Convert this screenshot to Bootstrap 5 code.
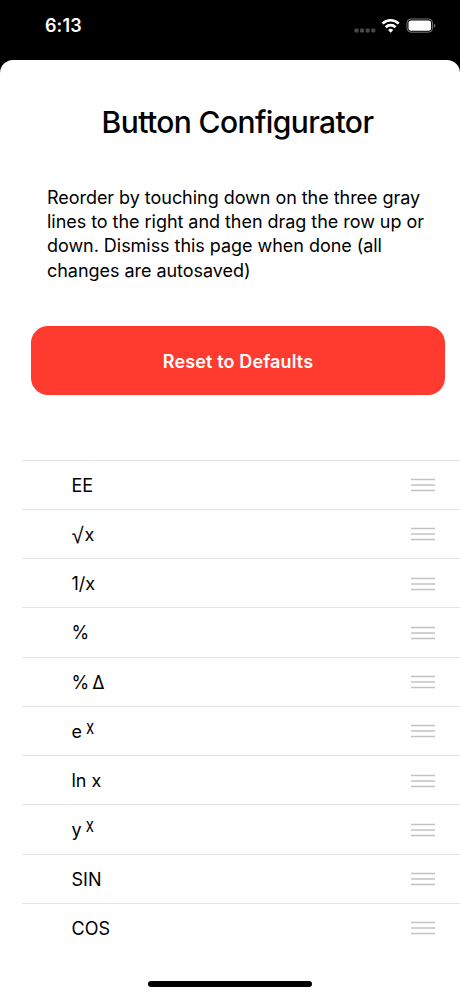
<!DOCTYPE html>
<html lang="en">
<head>
<meta charset="utf-8">
<meta name="viewport" content="width=device-width, initial-scale=1">
<title>Button Configurator</title>
<link href="https://cdn.jsdelivr.net/npm/bootstrap@5.3.0/dist/css/bootstrap.min.css" rel="stylesheet">
<style>
body{font-family:Inter,"Liberation Sans",sans-serif;color:#000;background:#000;height:996px;overflow:hidden}
.status-bar{height:60px;padding:0 24px 8px 45px}
.clock{font-size:18px;font-weight:600;letter-spacing:.1px;line-height:20px}
.sheet{height:936px;border-radius:13px 13px 0 0}
.page-title{font-size:30px;font-weight:500;line-height:36px;letter-spacing:-.6px;padding:44px 0 0 15px}
.intro{font-size:18px;line-height:24.4px;letter-spacing:-.04px;padding:45.6px 20px 0 47px}
.btn-reset{--bs-btn-bg:#ff3b30;--bs-btn-color:#fff;--bs-btn-hover-bg:#e6352b;--bs-btn-hover-color:#fff;height:69px;border:0;border-radius:17px;font-size:18px;font-weight:600;letter-spacing:.15px;padding-top:8px;margin:42.400px 15px 0 31px}
.keys{margin:65px 0 0 22px}
.key-row{height:49.25px;border-top:1px solid #e4e4e6;padding:1px 25px 0 49.5px;font-size:18px}
.radical{font-family:"Liberation Sans",sans-serif;font-size:22px;line-height:18px;margin-right:1px;transform:translateY(2px)}
.change{word-spacing:-2px}
.power{font-size:15px;line-height:18px;transform:translateY(-5px) scaleY(1.25);margin-left:4px}
.home-bar{width:164px;height:6px;margin-bottom:9px}
</style>
</head>
<body>
<header class="status-bar d-flex align-items-center justify-content-between text-white">
  <span class="clock">6:13</span>
  <div class="d-flex align-items-center">
    <svg width="82" height="20" viewBox="354 15.5 82 20" aria-label="Wi-Fi and battery">
      <g fill="#48484a"><rect x="354.5" y="28" width="4" height="4" rx="1.2"/><rect x="360" y="28" width="4" height="4" rx="1.2"/><rect x="365.700" y="28" width="4" height="4" rx="1.2"/><rect x="371.300" y="28" width="4" height="4" rx="1.2"/></g>
      <g fill="none" stroke="#fff" stroke-width="2.700"><path d="M382.600 23.100a11.400 11.400 0 0 1 16.100 0"/><path d="M385.700 26.700a7 7 0 0 1 9.900 0"/></g>
      <path d="M390.650 32.200l-2.600-2.700a3.700 3.700 0 0 1 5.200 0z" fill="#fff"/>
      <rect x="407" y="18.500" width="25.600" height="13.200" rx="4" fill="none" stroke="#77777a"/>
      <rect x="408.500" y="20" width="22.600" height="10.200" rx="2.600" fill="#fff"/>
      <path d="M434 23.200v4c1.800-.7 1.800-3.300 0-4z" fill="#77777a"/>
    </svg>
  </div>
</header>
<main class="sheet bg-white d-flex flex-column">
  <h1 class="page-title text-center mb-0">Button Configurator</h1>
  <p class="intro mb-0">Reorder by touching down on the three gray<br>lines to the right and then drag the row up or<br>down. Dismiss this page when done (all<br>changes are autosaved)</p>
  <button type="button" class="btn btn-reset">Reset to Defaults</button>
  <svg class="d-none"><symbol id="grip" viewBox="0 0 24 14"><path d="M0 1.500h24M0 7h24M0 12.500h24" stroke="#c2c2c5" stroke-width="1.400"/></symbol></svg>
  <ul class="keys list-unstyled mb-0">
    <li class="key-row d-flex align-items-center justify-content-between"><span>EE</span><svg width="24" height="14"><use href="#grip"/></svg></li>
    <li class="key-row d-flex align-items-center justify-content-between"><span><span class="radical d-inline-block">√</span>x</span><svg width="24" height="14"><use href="#grip"/></svg></li>
    <li class="key-row d-flex align-items-center justify-content-between"><span>1/x</span><svg width="24" height="14"><use href="#grip"/></svg></li>
    <li class="key-row d-flex align-items-center justify-content-between"><span>%</span><svg width="24" height="14"><use href="#grip"/></svg></li>
    <li class="key-row d-flex align-items-center justify-content-between"><span class="change">% Δ</span><svg width="24" height="14"><use href="#grip"/></svg></li>
    <li class="key-row d-flex align-items-center justify-content-between"><span>e<span class="power d-inline-block">x</span></span><svg width="24" height="14"><use href="#grip"/></svg></li>
    <li class="key-row d-flex align-items-center justify-content-between"><span>ln x</span><svg width="24" height="14"><use href="#grip"/></svg></li>
    <li class="key-row d-flex align-items-center justify-content-between"><span>y<span class="power d-inline-block">x</span></span><svg width="24" height="14"><use href="#grip"/></svg></li>
    <li class="key-row d-flex align-items-center justify-content-between"><span>SIN</span><svg width="24" height="14"><use href="#grip"/></svg></li>
    <li class="key-row d-flex align-items-center justify-content-between"><span>COS</span><svg width="24" height="14"><use href="#grip"/></svg></li>
  </ul>
  <div class="home-bar bg-black rounded-pill mt-auto mx-auto"></div>
</main>
<script src="https://cdn.jsdelivr.net/npm/bootstrap@5.3.0/dist/js/bootstrap.bundle.min.js"></script>
</body>
</html>
